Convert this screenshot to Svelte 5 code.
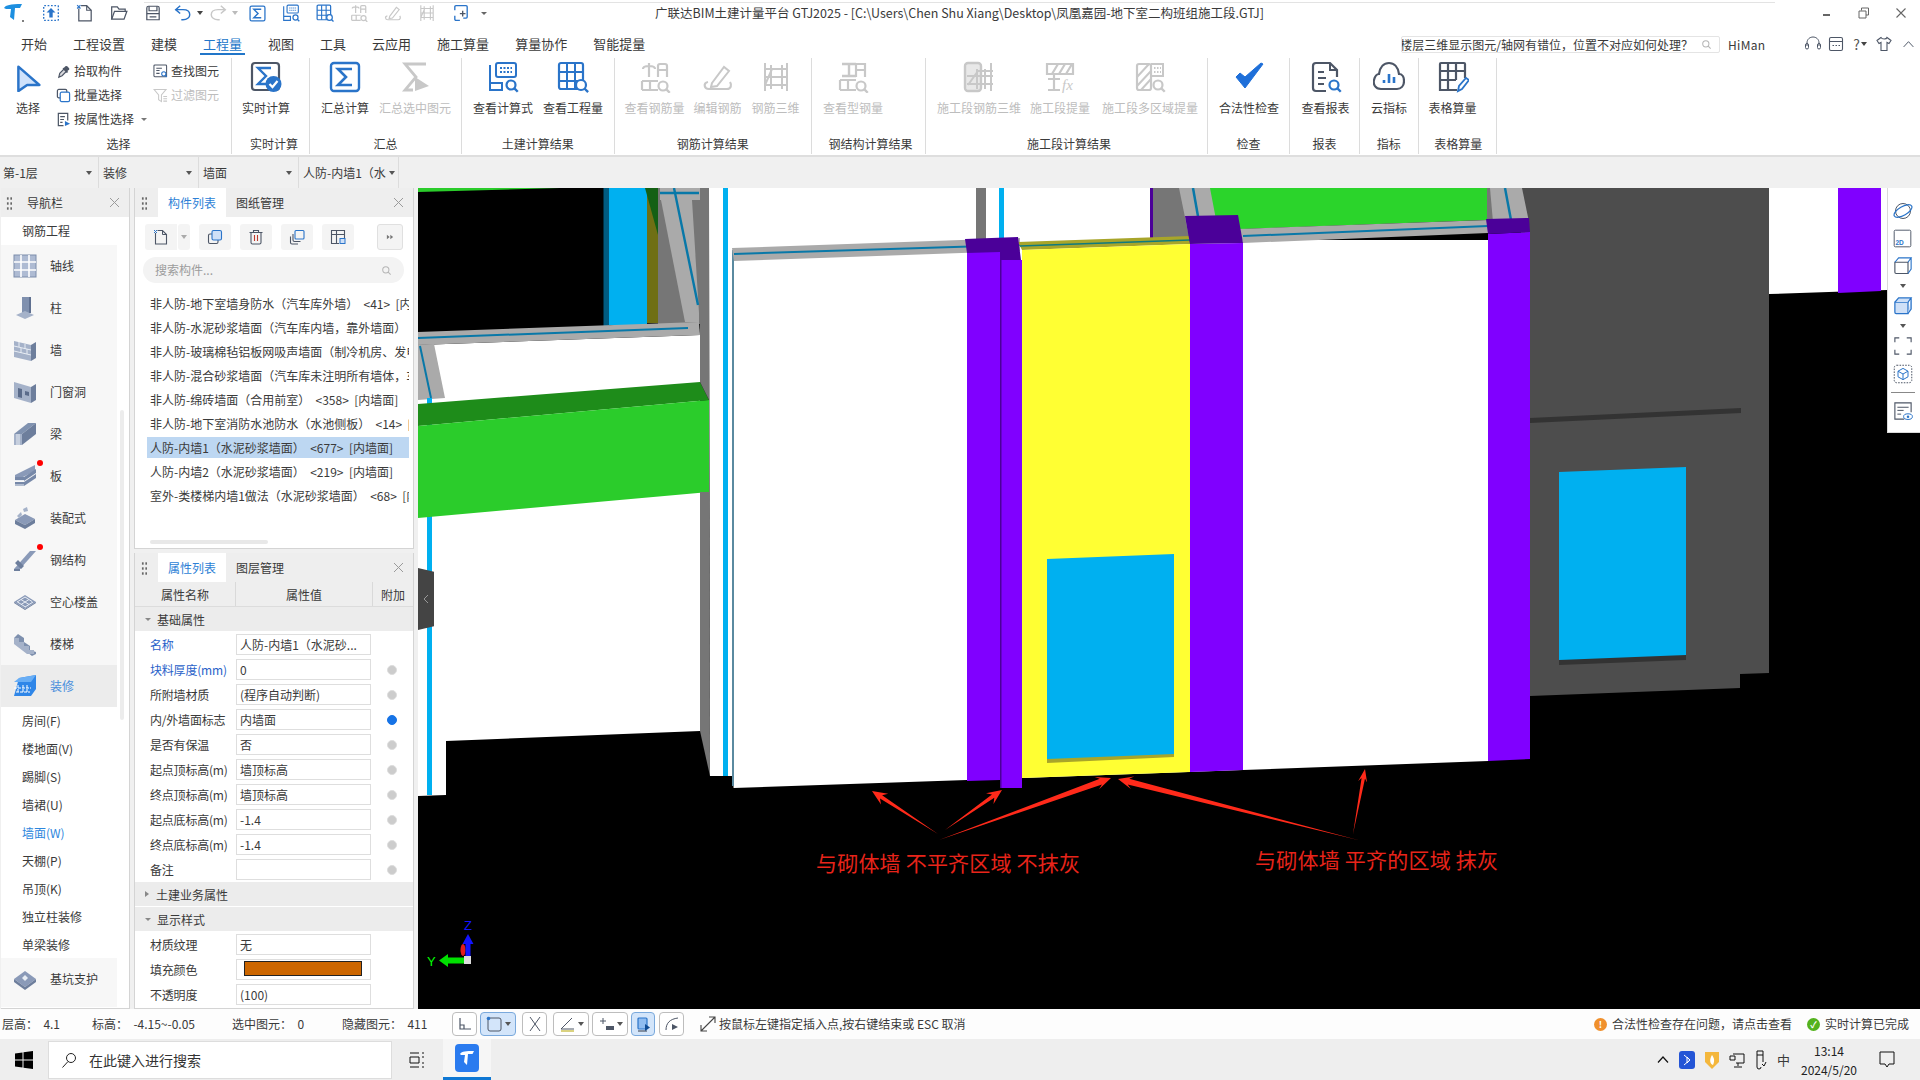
<script>
const B = '#2a74c9', D = '#4d5666', G = '#c8c8c8';
const mag = (c, x = 24, y = 24, r = 4.5) => `<circle cx="${x}" cy="${y}" r="${r}" stroke="${c}" stroke-width="2.2" fill="#fff"/><path d="M${x + r * 0.7} ${y + r * 0.7}l3.6 3.6" stroke="${c}" stroke-width="2.4"/>`;
const s = (c, w = 2) => `stroke="${c}" stroke-width="${w}" fill="none"`;
const icons = {
  select: `<path d="M5 3 29 24H15L5 31Z" fill="#cfe2fb" stroke="${B}" stroke-width="2.8" stroke-linejoin="round"/>`,
  sigmaChk: `<rect x="2" y="2" width="27" height="27" rx="3" ${s(D, 2.2)}/><path d="M21 7H8l8 8-8 8h8" ${s(B, 2.4)}/><circle cx="23.500" cy="23" r="8" fill="${B}"/><path d="M19.500 23l3 3 5-6" ${s('#fff', 2.2)}/>`,
  sigma: `<rect x="2" y="2" width="28" height="28" rx="3" ${s(B, 2.4)}/><path d="M23 8H9l8 8-8 8h14" ${s(B, 2.6)}/>`,
  sigmaG: `<path d="M27 3H6l11 13L6 29h8" ${s(G, 2.8)}/><path d="M16 16l14 9-14 5z" fill="${G}"/>`,
  calc: `<path d="M3 4V29H15V22H3" ${s(B, 2)}/><rect x="9" y="2" width="20" height="14" rx="2" ${s(B, 2)}/><path d="M13 7h12M13 11h12" stroke="${B}" stroke-width="2" stroke-dasharray="2 1.500"/>${mag(B, 24, 24)}`,
  qty: `<rect x="2" y="2" width="24" height="26" rx="2" ${s(B, 2.2)}/><path d="M10 2v26M18 2v26M2 11h24M2 20h24" ${s(B, 2)}/>${mag(B, 24, 24, 5)}`,
  rebarQ: `<path d="M10 2v14M4 8c0-4 12-4 12 0" ${s(G, 2.2)}/><path d="M19 16V5a2 2 0 0 1 2-2h5a2 2 0 0 1 2 2v11M19 9h9" ${s(G, 2.2)}/><path d="M3 20h16M3 29h16M3 20v9M11 20v9" ${s(G, 2.2)}/>${mag(G, 24, 25)}`,
  edit: `<path d="M10 22 22 6l5 4-12 15-6 1z" ${s(G, 2)}/><path d="M28 21c2 3 1 7-3 7H7c-5 0-6-6-1-7" ${s(G, 2.2)}/>`,
  rebar3d: `<path d="M5 2v28M27 2v28M5 8h22M5 16h22M5 24h22M5 24 12 8M22 4v24M11 4v24" ${s(G, 2)}/>`,
  steelQ: `<path d="M5 3h14M12 3v13M5 15h14" ${s(G, 2.4)}/><path d="M19 16V3h9v13M19 9h9" ${s(G, 2.2)}/><path d="M3 19h16M3 29h16M3 19v10M11 19v10" ${s(G, 2.2)}/>${mag(G, 24, 25)}`,
  sec3d: `<rect x="2" y="2" width="16" height="28" rx="3" fill="#e8e8e8" ${`stroke="${G}" stroke-width="2.400"`}/><path d="M5 24 15 10h15M4 15h26M4 23h26M28 2v28M14 8v20M22 8v20" ${s(G, 2)}/>`,
  secFx: `<path d="M3 3h26v10H3zM8 13 14 3M15 13 21 3M22 13 28 3M4 18h12M10 13v16M4 29h12" ${s(G, 2.2)}/><text x="18" y="29" font-family="Liberation Serif,serif" font-style="italic" font-size="15" fill="${G}">fx</text>`,
  secMulti: `<rect x="3" y="3" width="14" height="26" rx="2" ${s(G, 2.2)}/><path d="M3 16 15 3M3 25 17 10M7 29l10-11" ${s(G, 2)}/><path d="M17 3h12v12H17" ${s(G, 2)}/><path d="M20 7h7M20 11h7" stroke="${G}" stroke-width="2" stroke-dasharray="1.500 1.500"/>${mag(G, 24, 24)}`,
  check: `<path d="M3 16l9 11L30 3l-2-1-16 14-5-4z" fill="#1e6fd9" stroke="#1e6fd9" stroke-width="1"/>`,
  report: `<path d="M16 30H6a3 3 0 0 1-3-3V5a3 3 0 0 1 3-3h14l7 7v7" ${s(D, 2.2)}/><path d="M20 2v7h7" ${s(D, 2)}/><path d="M8 11h6M8 17h8M8 23h6" ${s(D, 2.200)}/>${mag(B, 24, 24, 4.5)}`,
  cloud: `<path d="M8 28C2 28 0 23 1 19c1-4 3-6 5-6 1-7 5-11 10-11s9 4 10 11c3 0 5 3 5 7 0 5-3 8-7 8z" ${s(D, 2.2)}/><path d="M11 22v-3M16 22v-9M21 22v-6" ${s(B, 2.6)}/>`,
  tableEdit: `<path d="M20 29H3V3a1 1 0 0 1 1-1h23a1 1 0 0 1 1 1v14M3 10h25M3 19h16M11 2v27M19 2v17" ${s(D, 2.2)}/><path d="M21 30l1-5 7-8 3 2-7 9z" ${s(B, 1.800)}/>`,
  pick: `<path d="M6 28l2-8 10-10 5 5-10 10z" fill="#d8d8dc" stroke="${D}" stroke-width="2.500"/><path d="M17 8l3-3a3 3 0 0 1 4 0l4 4a3 3 0 0 1 0 3l-4 3 2 2-3 2L14 10l2-2z" fill="${D}"/>`,
  batch: `<rect x="3" y="3" width="20" height="18" rx="3" ${s(D, 2.6)}/><rect x="9" y="9" width="20" height="20" rx="3" fill="#fff" stroke="${B}" stroke-width="2.600"/>`,
  prop: `<path d="M16 29H5V3h20v15" ${s(D, 2.6)}/><path d="M9 10h10M9 16h8M9 22h5" ${s(D, 2.6)}/><path d="M19 19l11 6-11 5z" fill="${B}"/>`,
  find: `<rect x="2" y="2" width="27" height="25" rx="2" ${s(D, 2.2)}/><path d="M7 9h12M7 14h7M7 20h7" ${s(D, 2.2)}/>${mag(B, 23, 21, 4.5)}`,
  filter: `<path d="M2 3h26L18 15v14l-6-4V15z" ${s(G, 2.2)}/><path d="M22 18h8M22 23h8M22 28h8" ${s(G, 2.2)}/>`,
  upload: `<rect x="3" y="3" width="26" height="26" rx="1" ${s(B, 2.4)} stroke-dasharray="3 3"/><path d="M16 7l8 8h-5v9h-6v-9H8z" fill="${B}"/>`,
  newdoc: `<path d="M5 8V30h22V11l-8-8H9" ${s(D, 2.2)}/><path d="M19 3v8h8" ${s(D, 2)}/><path d="M2 2l6 6M8 2l-6 6" ${s(B, 2)}/>`,
  open: `<path d="M3 27V5h10l3 4h11v4" ${s(D, 2.2)}/><path d="M3 27l5-14h22l-5 14z" ${s(D, 2.2)}/>`,
  save: `<path d="M5 28V7a3 3 0 0 1 3-3h16a3 3 0 0 1 3 3v21z" ${s(D, 2.2)}/><path d="M5 17h22M9 4v8h14V4M10 23h12" ${s(D, 2.2)}/>`,
  undo: `<path d="M11 3 3 10l8 7" ${s(B, 2.6)}/><path d="M3 10h13c8 0 12 4 12 9s-5 9-12 9h-3" ${s(B, 2.6)}/>`,
  redo: `<path d="M21 3l8 7-8 7" ${s(G, 2.6)}/><path d="M29 10H16C8 10 4 14 4 19s5 9 12 9h3" ${s(G, 2.6)}/>`,
  boxplus: `<path d="M5 11V5a2 2 0 0 1 2-2h18a2 2 0 0 1 2 2v18a2 2 0 0 1-2 2h-5M14 29H7a2 2 0 0 1-2-2v-6" ${s(B, 2.4)}/><path d="M14 17h10M19 12v10" ${s(D, 2.400)}/>`,
  copy: `<rect x="3" y="10" width="19" height="19" rx="3" ${s(D, 2.2)}/><rect x="10" y="3" width="19" height="19" rx="3" fill="#cfe0f7" stroke="${B}" stroke-width="2.200"/>`,
  trash: `<path d="M3 7h26M11 7V3h10v4M6 7v20a3 3 0 0 0 3 3h14a3 3 0 0 0 3-3V7" ${s(D, 2.2)}/><path d="M13 12v12M19 12v12" stroke="#c0392b" stroke-width="2.200"/>`,
  copy2: `<path d="M3 15v12a3 3 0 0 0 3 3h12M8 10v12a3 3 0 0 0 3 3h12" ${s(D, 2.2)}/><rect x="12" y="3" width="18" height="17" rx="2" ${s(B, 2.2)}/>`,
  tbl: `<path d="M18 29H3V3h26v15" ${s(D, 2.2)}/><path d="M3 11h10M13 3v26M13 11h16" ${s(D, 2.2)}/><rect x="20" y="19" width="10" height="10" fill="#cfe0f7" stroke="${B}" stroke-width="2"/>`,
  orbit: `<ellipse cx="16" cy="16" rx="12" ry="12" ${s(D, 1.600)}/><ellipse cx="16" cy="16" rx="16" ry="7" transform="rotate(-30 16 16)" ${s(B, 2)}/>`,
  two: `<rect x="2" y="2" width="28" height="28" rx="2" ${s(D, 1.600)}/><text x="4" y="27" font-family="Liberation Sans,sans-serif" font-weight="700" font-size="11" fill="${B}">2D</text>`,
  cube: `<path d="M3 10v16a2 2 0 0 0 2 2h19V10z" ${s(D, 1.800)}/><path d="M3 10l6-7h20l-5 7M29 3v18l-5 7" ${s(B, 1.800)}/>`,
  cubeB: `<path d="M3 10v16a2 2 0 0 0 2 2h19V10z" fill="#cfe0f7" stroke="${B}" stroke-width="2"/><path d="M3 10l6-7h20l-5 7M29 3v18l-5 7" fill="#cfe0f7" stroke="${B}" stroke-width="2"/>`,
  corners: `<path d="M3 10V3h7M22 3h7v7M29 22v7h-7M10 29H3v-7" ${s(D, 1.800)}/>`,
  hexbox: `<rect x="2" y="2" width="28" height="28" rx="4" ${s(D, 1.600)} stroke-dasharray="2.500 2"/><path d="M16 7l8 4.500v9L16 25l-8-4.500v-9zM8 11.500l8 4.500 8-4.500M16 16v9" ${s(B, 1.600)}/>`,
  listeye: `<path d="M18 29H3V3h26v15" ${s(D, 1.800)}/><path d="M7 10h18M7 15h10M7 21h6" ${s(D, 1.600)}/><ellipse cx="24" cy="25" rx="7" ry="4.500" ${s(B, 1.600)}/><circle cx="24" cy="25" r="2" fill="${B}"/>`,
  glass: `<circle cx="14" cy="14" r="9" ${s('#b5b5b5', 3)}/><path d="M21 21l7 7" ${s('#b5b5b5', 3)}/>`,
  headset: `<path d="M4 20v-6C4 6 10 2 16 2s12 4 12 12v6" ${s(D, 2)}/><rect x="1" y="15" width="6" height="11" rx="3" ${s(D, 2)}/><rect x="25" y="15" width="6" height="11" rx="3" ${s(D, 2)}/>`,
  cal: `<rect x="3" y="3" width="26" height="26" rx="3" ${s(D, 2.2)}/><path d="M3 11h26M9 19h3M15 19h3M21 19h3" ${s(D, 2.2)}/>`,
  shirt: `<path d="M10 3 2 9l4 6 4-2v16h12V13l4 2 4-6-8-6c-1 4-10 4-12 0z" ${s(D, 2.200)}/>`,
  up: `<path d="M4 22 16 9l12 13" ${s(D, 2.400)}/>`,
  ff: `<path d="M6 9l9 7-9 7zM17 9l9 7-9 7z" fill="#777"/>`,
};

const nav = [
  ['轴线', 'grid'], ['柱', 'col'], ['墙', 'wall'], ['门窗洞', 'door'], ['梁', 'beam'], ['板', 'slab', true], ['装配式', 'pre'], ['钢结构', 'steel', true], ['空心楼盖', 'hollow'], ['楼梯', 'stair'], ['装修', 'deco']
];
const sub = ['房间(F)', '楼地面(V)', '踢脚(S)', '墙裙(U)', '墙面(W)', '天棚(P)', '吊顶(K)', '独立柱装修', '单梁装修'];
const navIcons = {
  grid: `<rect x="1" y="1" width="22" height="22" fill="#aebbd3" stroke="#7d8dab"/><path d="M8 1v22M16 1v22M1 8h22M1 16h22" stroke="#fff" stroke-width="1.600"/>`,
  col: `<path d="M9 1h7v16H9z" fill="#7f90ae"/><path d="M16 1h2v16h-2z" fill="#5f7090"/><path d="M3 19l9-4 9 4-9 4z" fill="#a5b2c9"/>`,
  wall: `<path d="M1 3l17 4v16L1 19z" fill="#a5b2c9"/><path d="M18 7l5-3v16l-5 3z" fill="#6d7e9c"/><path d="M1 8l17 4M1 13l17 4M6 4v5M12 6v5M8 10v5M14 11v5" stroke="#e8edf4"/>`,
  door: `<path d="M1 2l17 5v16L1 18z" fill="#a5b2c9"/><path d="M18 7l5-3v16l-5 3z" fill="#6d7e9c"/><path d="M5 8l4 1v9l-4-1zM12 11l4 1v4l-4-1z" fill="#5a6b8a"/>`,
  beam: `<path d="M1 12 15 1h8L9 12z" fill="#8092b0"/><path d="M1 12h8v11H1z" fill="#a5b2c9"/><path d="M9 12 23 1v11L9 23z" fill="#6d7e9c"/><path d="M4 12v11M6 12v11" stroke="#e8edf4"/>`,
  slab: `<path d="M2 11 22 1v6L8 14 2 13z" fill="#8a9ab8"/><path d="M2 13h9l12-8v4L11 17H2zM2 18h9l12-8v4L11 22H2z" fill="#7688a8"/><path d="M2 16.500h9M2 21h9" stroke="#e8edf4"/>`,
  pre: `<path d="M2 14l10-6 10 5-10 6z" fill="#8a9ab8"/><path d="M2 14v4l10 5 10-6v-4l-10 6z" fill="#6d7e9c"/><path d="M4 10l4-4 1 3-3 3zM10 3l4-2 1 4-4 1z" fill="#a5b2c9"/>`,
  steel: `<path d="M1 21 17 3h6L7 21z" fill="#8a9ab8"/><path d="M1 21h6v2H1zM5 12l6 6-3 3-6-6z" fill="#6d7e9c"/>`,
  hollow: `<path d="M1 12 12 5l11 7-11 7z" fill="#8a9ab8"/><path d="M4 12l8-5M8 14.500l8-5M12 17l8-5M8 9.500l8 5M4.500 12l8 5M12 7l7 4.500" stroke="#e8edf4" stroke-width="1"/><path d="M1 12v1l11 7 11-7v-1l-11 7z" fill="#6d7e9c"/>`,
  stair: `<path d="M1 6l4-4 6 4v4l6 4v4l6 2v2l-4 2L1 10z" fill="#7e90ae"/><path d="M1 6h5v4h5v4h5v4h5v4H14L1 12z" fill="#a5b2c9"/>`,
  deco: `<path d="M6 4 23 1v14L18 22H1z" fill="#2f86e8"/><path d="M6 4 23 1 18 8H1z" fill="#69aef5"/><path d="M1 14h17M3 18h14M5 11v7M10 11v7M14 11v7" stroke="#fff" stroke-dasharray="3 1"/>`,
  pit: `<path d="M1 12 12 4l11 8-11 8z" fill="#8a9ab8"/><path d="M1 12v3l11 8 11-8v-3l-11 8z" fill="#6d7e9c"/><path d="M9 11l3-3 3 3-3 3z" fill="#e8edf4"/>`
};

const listRows = [
  '非人防-地下室墙身防水（汽车库外墙）  <41>  [内墙面]',
  '非人防-水泥砂浆墙面（汽车库内墙，靠外墙面）',
  '非人防-玻璃棉毡铝板网吸声墙面（制冷机房、发电机房）',
  '非人防-混合砂浆墙面（汽车库未注明所有墙体，车库）',
  '非人防-绵砖墙面（合用前室）  <358>  [内墙面]',
  '非人防-地下室消防水池防水（水池侧板）  <14>  [内墙面]',
  '人防-内墙1（水泥砂浆墙面）  <677>  [内墙面]',
  '人防-内墙2（水泥砂浆墙面）  <219>  [内墙面]',
  '室外-类楼梯内墙1做法（水泥砂浆墙面）  <68>  [内墙面]'
];

const groups = [
  { label: '实时计算', w: 78, pad: 5, shift: 7, items: [['实时计算', 58, 'sigmaChk']] },
  { label: '汇总', w: 152, pad: 7, items: [['汇总计算', 56, 'sigma'], ['汇总选中图元', 84, 'sigmaG', 1]] },
  { label: '土建计算结果', w: 152.5, pad: 6, items: [['查看计算式', 70, 'calc'], ['查看工程量', 70, 'qty']] },
  { label: '钢筋计算结果', w: 197.5, pad: 8, items: [['查看钢筋量', 64, 'rebarQ', 1], ['编辑钢筋', 62, 'edit', 1], ['钢筋三维', 54, 'rebar3d', 1]] },
  { label: '钢结构计算结果', w: 114, pad: 6, shift: 4, items: [['查看型钢量', 70, 'steelQ', 1]] },
  { label: '施工段计算结果', w: 282, pad: 5, shift: 5, items: [['施工段钢筋三维', 96, 'sec3d', 1], ['施工段提量', 66, 'secFx', 1], ['施工段多区域提量', 114, 'secMulti', 1]] },
  { label: '检查', w: 82, pad: 0, items: [['合法性检查', 82, 'check']] },
  { label: '报表', w: 70, pad: 0, items: [['查看报表', 71, 'report']] },
  { label: '指标', w: 58.500, pad: 0, items: [['云指标', 58, 'cloud']] },
  { label: '表格算量', w: 78.500, pad: 0, shift: 2, items: [['表格算量', 68, 'tableEdit']] }
];

const quick = [['upload', 34], ['newdoc', 34], ['open', 34], ['save', 34]];

const props = [
  ['g', '基础属性', true],
  ['名称', '人防-内墙1（水泥砂...', 'b', false],
  ['块料厚度(mm)', '0', 'b', true],
  ['所附墙材质', '(程序自动判断)', '', true],
  ['内/外墙面标志', '内墙面', '', 'on'],
  ['是否有保温', '否', '', true],
  ['起点顶标高(m)', '墙顶标高', '', true],
  ['终点顶标高(m)', '墙顶标高', '', true],
  ['起点底标高(m)', '-1.4', '', true],
  ['终点底标高(m)', '-1.4', '', true],
  ['备注', '', '', true],
  ['g', '土建业务属性', false],
  ['g', '显示样式', true],
  ['材质纹理', '无', '', false],
  ['填充颜色', '#swatch', '', false],
  ['不透明度', '(100)', '', false]
];

function arrow(tx, ty, hx, hy, w = 5, hl = 15, hw = 6.500) {
  const L = Math.hypot(hx - tx, hy - ty), dx = (hx - tx) / L, dy = (hy - ty) / L, nx = -dy, ny = dx;
  const bx = hx - dx * hl, by = hy - dy * hl, cx = hx - dx * hl * 0.72, cy = hy - dy * hl * 0.72;
  return [[tx, ty], [cx + nx * w / 2, cy + ny * w / 2], [bx + nx * hw, by + ny * hw], [hx, hy], [bx - nx * hw, by - ny * hw], [cx - nx * w / 2, cy - ny * w / 2]].map((p) => p.map((v) => v.toFixed(1)).join(',')).join(' ');
}
const arrows = [arrow(938, 834, 872, 791, 4), arrow(945, 830, 1002, 790, 4), arrow(939, 840, 1111, 778, 6), arrow(1358, 840, 1118, 779, 6), arrow(1353, 834, 1365, 769, 3.500, 13, 4.500)];

const stBtns = [
  { w: 25, ml: 0, i: `<path d="M3 2v11h11M3 9h4v4" stroke="${D}" stroke-width="1.200" fill="none"/>` },
  { w: 36, ml: 3, on: true, drop: true, i: `<rect x="2" y="2" width="13" height="13" rx="2" stroke="${D}" fill="none"/><circle cx="2.500" cy="2.500" r="1.800" fill="${B}"/>` },
  { w: 25, ml: 6, i: `<path d="M3 1l10 14M13 1 3 15" stroke="${D}" fill="none"/>` },
  { w: 36, ml: 6, drop: true, i: `<path d="M2 13 13 2M2 13h13" stroke="${D}" fill="none"/><path d="M2 15h13" stroke="#b5a500"/>` },
  { w: 36, ml: 3, drop: true, i: `<path d="M2 5h6M5 2v6" stroke="${D}" fill="none"/><rect x="8" y="10" width="8" height="4" fill="${D}"/>` },
  { w: 24, ml: 3, on: true, i: `<rect x="3" y="2" width="9" height="11" rx="1" fill="#8fbcf0" stroke="#2a74c9" stroke-width="1.200"/><path d="M3 15h9" stroke="${D}" stroke-width="1.200"/><path d="M10 8l5 3.500-5 3.500z" fill="#0f4b94"/>` },
  { w: 25, ml: 4, i: `<path d="M2 14C2 7 6 3 14 2" stroke="${D}" fill="none"/><path d="M8 8l6 3-6 3z" fill="${D}"/>` }
];
</script>

{#snippet ic(name, size)}
  <svg class="ico" width={size} height={size} viewBox="0 0 32 32" fill="none">{@html icons[name]}</svg>
{/snippet}

<div class="app">
  <header class="titlebar">
    <div class="logo">
      <svg width="22" height="22" viewBox="0 0 22 22"><path d="M1 6C3 3 7 2 19 2l-2 4h-5l-1 12-4-3 1-8H3z" fill="#1d8fe0"/><circle cx="20" cy="19" r="1" fill="#555"/></svg>
    </div>
    {#each quick as q}
      <div class="qa">{@render ic(q[0], 18)}</div>
    {/each}
    <div class="qa wide">{@render ic('undo', 18)}<i class="car"></i></div>
    <div class="qa wide">{@render ic('redo', 18)}<i class="car lt"></i></div>
    <div class="qa">{@render ic('sigma', 17)}</div>
    <div class="qa">{@render ic('calc', 18)}</div>
    <div class="qa">{@render ic('qty', 18)}</div>
    <div class="qa">{@render ic('rebarQ', 18)}</div>
    <div class="qa">{@render ic('edit', 18)}</div>
    <div class="qa">{@render ic('rebar3d', 18)}</div>
    <div class="qa">{@render ic('boxplus', 18)}</div>
    <i class="car small"></i>
    <div class="title">广联达BIM土建计量平台 GTJ2025 - [C:\Users\Chen Shu Xiang\Desktop\凤凰嘉园-地下室二构班组施工段.GTJ]</div>
    <div class="winbtns">
      <svg width="12" height="12" viewBox="0 0 12 12"><rect x="2" y="7" width="7" height="2" fill="#666"/></svg>
      <svg width="12" height="12" viewBox="0 0 12 12"><path d="M3.500 3.500V1h7v7H8M1 4h7v7H1z" stroke="#666" fill="none"/></svg>
      <svg width="12" height="12" viewBox="0 0 12 12"><path d="M1.500 1.500l9 9M10.500 1.500l-9 9" stroke="#666" stroke-width="1.100"/></svg>
    </div>
  </header>

  <nav class="tabs">
    {#each ['开始', '工程设置', '建模', '工程量', '视图', '工具', '云应用', '施工算量', '算量协作', '智能提量'] as t}
      <span class="tab" class:active={t === '工程量'}>{t}</span>
    {/each}
    <div class="tabs-right">
      <div class="help">
        <span class="help-text">楼层三维显示图元/轴网有错位，位置不对应如何处理？</span>
        {@render ic('glass', 11)}
      </div>
      <span class="user">HiMan</span>
      <span class="hi first">{@render ic('headset', 16)}</span>
      <span class="hi">{@render ic('cal', 16)}</span>
      <span class="hi q">?<i class="car tiny"></i></span>
      <span class="hi">{@render ic('shirt', 16)}</span>
      <span class="hi">{@render ic('up', 13)}</span>
    </div>
  </nav>

  <section class="ribbon">
    <div class="group sel-group">
      <div class="gbody selbody">
        <div class="big selbig">{@render ic('select', 28)}<span>选择</span></div>
        <div class="tools col1">
          <div class="tool">{@render ic('pick', 15)}<span>拾取构件</span></div>
          <div class="tool">{@render ic('batch', 15)}<span>批量选择</span></div>
          <div class="tool">{@render ic('prop', 15)}<span>按属性选择</span><i class="car small2"></i></div>
        </div>
        <div class="tools col2">
          <div class="tool">{@render ic('find', 15)}<span>查找图元</span></div>
          <div class="tool off">{@render ic('filter', 15)}<span>过滤图元</span></div>
        </div>
      </div>
      <div class="glabel g-sel">选择</div>
    </div>
    {#each groups as g}
      <div class="group" style="width:{g.w}px">
        <div class="gbody" style="padding-left:{g.pad}px">
          {#each g.items as it}
            <div class="big" class:off={it[3]} style="width:{it[1]}px">
              {@render ic(it[2], 32)}
              <span>{it[0]}</span>
            </div>
          {/each}
        </div>
        <div class="glabel" style="padding-left:{g.shift || 0}px">{g.label}</div>
      </div>
    {/each}
    <div class="group last"></div>
  </section>

  <section class="combos">
    <div class="combo">第-1层<i class="car dk"></i></div>
    <div class="combo">装修<i class="car dk"></i></div>
    <div class="combo">墙面<i class="car dk"></i></div>
    <div class="combo clip"><span>人防-内墙1（水</span><i class="car dk"></i></div>
  </section>

  <main class="main">
    <aside class="navpanel">
      <div class="phead">
        <span class="dots"></span>
        <span class="phtitle">导航栏</span>
        <span class="x"></span>
      </div>
      <div class="navcat">钢筋工程</div>
      {#each nav as n}
        <div class="navitem" class:sel={n[0] === '装修'}>
          <svg class="nico" width="24" height="24" viewBox="0 0 24 24">{@html navIcons[n[1]]}</svg>
          <span>{n[0]}</span>
          {#if n[2]}<b class="reddot"></b>{/if}
        </div>
      {/each}
      {#each sub as x}
        <div class="subitem" class:cur={x === '墙面(W)'}>{x}</div>
      {/each}
      <div class="navitem pit">
        <svg class="nico" width="24" height="24" viewBox="0 0 24 24">{@html navIcons.pit}</svg>
        <span>基坑支护</span>
      </div>
      <div class="vthumb"></div>
    </aside>

    <div class="midcol">
      <section class="panel listpanel">
        <div class="phead">
          <span class="dots"></span>
          <span class="ptab act">构件列表</span>
          <span class="ptab">图纸管理</span>
          <span class="x"></span>
        </div>
        <div class="toolbar">
          <span class="tbtn first">{@render ic('newdoc', 16)}</span>
          <span class="tbtn drop"><i class="car"></i></span>
          <span class="tbtn">{@render ic('copy', 16)}</span>
          <span class="tbtn">{@render ic('trash', 16)}</span>
          <span class="tbtn">{@render ic('copy2', 16)}</span>
          <span class="tbtn">{@render ic('tbl', 16)}</span>
          <span class="tbtn more">{@render ic('ff', 10)}</span>
        </div>
        <div class="searchbox"><span>搜索构件...</span>{@render ic('glass', 11)}</div>
        <div class="rows">
          {#each listRows as r, i}
            <div class="lrow" class:sel={i === 6}>{r}</div>
          {/each}
        </div>
        <div class="hthumb"></div>
      </section>
      <section class="panel proppanel">
        <div class="phead">
          <span class="dots"></span>
          <span class="ptab act">属性列表</span>
          <span class="ptab">图层管理</span>
          <span class="x"></span>
        </div>
        <div class="thead"><span>属性名称</span><span>属性值</span><span>附加</span></div>
        {#each props as p}
          {#if p[0] === 'g'}
            <div class="pgroup"><i class={p[2] ? 'tri open' : 'tri'}></i>{p[1]}</div>
          {:else}
            <div class="prow">
              <span class="pname" class:blue={p[2] === 'b'}>{p[0]}</span>
              <span class="pval">
                {#if p[1] === '#swatch'}<b class="swatch"></b>{:else}{p[1]}{/if}
              </span>
              <span class="padd">{#if p[3]}<b class="dot" class:on={p[3] === 'on'}></b>{/if}</span>
            </div>
          {/if}
        {/each}
      </section>
    </div>

    <section class="viewport">
      <svg class="scene" width="1502" height="821" viewBox="418 188 1502 821">
        <rect x="418" y="188" width="1502" height="821" fill="#000"/>
        <polygon points="418,188 560,188 418,192" fill="#2bcc2b"/>
        <rect x="603.500" y="188" width="6" height="138" fill="#005b80"/>
        <rect x="609" y="188" width="38" height="137" fill="#00b0f0"/>
        <rect x="647" y="188" width="12" height="135" fill="#6f6f14"/>
        <polygon points="645,188 658,188 658,235" fill="#146014"/>
        <rect x="658" y="188" width="42" height="136" fill="#767676"/>
        <rect x="660" y="188" width="40" height="12" fill="#aaa"/>
        <polygon points="661,200 692,200 699,313 699,322 685,322" fill="#aaa"/>
        <path d="M660 193H699M674 188 698 305" stroke="#0878a8" stroke-width="2.400" fill="none"/>
        <polygon points="418,345 700,335 700,731 446,741 446,795 418,796" fill="#fff"/>
        <polygon points="418,332 699,322 700,335 418,345" fill="#aaa"/>
        <path d="M418 338 688 328" stroke="#0878a8" stroke-width="2" fill="none"/>
        <polygon points="418,345 434,344 445,398 418,400" fill="#aaa"/>
        <path d="M420 346 431 398" stroke="#0878a8" stroke-width="2" fill="none"/>
        <rect x="427" y="398" width="5" height="397" fill="#00b0f0"/>
        <polygon points="418,404 700,382 709,400 418,426" fill="#1e8c1a"/>
        <polygon points="418,426 709,400 709,492 418,518" fill="#2bcc2b"/>
        <polygon points="700,188 709,188 709,400 700,382" fill="#767676"/>
        <polygon points="700,492 709,492 710,776 700,731" fill="#767676"/>

        <polygon points="1521,188 1769,188 1769,673 1740,674 1740,688 1530,696 1530,234 1521,234" fill="#4d4d4d"/>
        <polygon points="1530,418 1741,408 1741,413 1530,423" fill="#333"/>
        <polygon points="1559,477 1686,472 1686,660 1559,665" fill="#333"/>
        <polygon points="1559,472 1686,467 1686,655 1559,660" fill="#00b0f0"/>
        <polygon points="1769,188 1887,188 1887,290 1769,294" fill="#fff"/>
        <polygon points="1838,188 1881,188 1881,291 1838,293" fill="#8000ff"/>

        <polygon points="709,188 1153,188 1153,240 1488,240 1488,761 1243,770 967,780 733.600,788 733,776 710,776" fill="#fff"/>
        <rect x="723" y="188" width="5" height="588" fill="#00b0f0"/>
        <rect x="732" y="250" width="2" height="536" fill="#5a8aa0"/>
        <rect x="976" y="188" width="10" height="54" fill="#767676"/>
        <rect x="999" y="188" width="5" height="54" fill="#00b0f0"/>
        <polygon points="732,248 1020,238 1020,251 734,261" fill="#aaa"/>
        <path d="M734 254 1020 245" stroke="#0878a8" stroke-width="2" fill="none"/>
        <rect x="1150" y="188" width="3" height="50" fill="#4b0099"/>
        <polygon points="1153,188 1186,188 1190,240 1153,240" fill="#767676"/>
        <polygon points="1179,188 1215,188 1222,232 1188,232" fill="#aaa"/>
        <path d="M1193 188 1199 222" stroke="#0878a8" stroke-width="2.500" fill="none"/>
        <polygon points="1210,188 1487,188 1487,220 1243,229 1218,230" fill="#2bd42b"/>
        <polygon points="1238,229 1488,220 1488,233 1243,243" fill="#aaa"/>
        <path d="M1243 236 1488 226" stroke="#0878a8" stroke-width="2" fill="none"/>
        <polygon points="1487,188 1493,188 1493,222 1487,222" fill="#767676"/>
        <polygon points="1490,188 1522,188 1529,222 1493,222" fill="#aaa"/>
        <path d="M1505 188 1511 220" stroke="#0878a8" stroke-width="2.500" fill="none"/>
        <polygon points="1018,242 1190,236 1190,244 1022,250" fill="#a8a52a"/>
        <path d="M1020 246 1190 240" stroke="#0d7a80" stroke-width="1.500" fill="none"/>
        <polygon points="1022,250 1190,244 1190,772 1022,778" fill="#ffff33"/>
        <polygon points="1047,564 1174,559 1174,757 1047,763" fill="#a8a52a"/>
        <polygon points="1047,559 1174,554 1174,754 1047,759" fill="#00b0f0"/>
        <polygon points="967,252 1000,252 1000,780 967,781" fill="#8000ff"/>
        <polygon points="965,239 1018,237 1021,260 1000,260 1000,252 967,253" fill="#4b0099"/>
        <polygon points="1000,260 1022,260 1022,788 1000,788" fill="#8000ff"/>
        <rect x="1000" y="252" width="1.500" height="536" fill="#4b0099"/>
        <polygon points="1190,244 1243,243 1243,770 1190,772" fill="#8000ff"/>
        <polygon points="1185,216 1238,215 1243,243 1190,244" fill="#4b0099"/>
        <polygon points="1488,234 1530,232 1530,759 1488,761" fill="#8000ff"/>
        <polygon points="1486,219 1529,218 1530,232 1488,234" fill="#4b0099"/>

        {#each arrows as a}
          <polygon points={a} fill="#ff2a1a"/>
        {/each}
        <text x="816" y="871" class="note" textLength="264">与砌体墙 不平齐区域 不抹灰</text>
        <text x="1255" y="868" class="note" textLength="243">与砌体墙 平齐的区域 抹灰</text>

        <text x="464" y="930" class="axis" fill="#1313ff">Z</text>
        <text x="427" y="966" class="axis" fill="#00ff00">Y</text>
        <ellipse cx="463" cy="950" rx="2.500" ry="6" fill="#e21b1b"/>
        <path d="M465.500 958V944h-3l5.500-10 5.500 10h-3v14z" fill="#1313ff"/>
        <path d="M464 957.500h-16v-3.500l-9 6.500 9 6.500v-3.500h16z" fill="#00e000"/>
        <rect x="464" y="956" width="7" height="8" fill="#ddd"/>
      </svg>

      <div class="collapse"><svg width="6" height="10" viewBox="0 0 6 10"><path d="M5 1 1 5l4 4" stroke="#999" fill="none"/></svg></div>

      <div class="sidetools">
        {@render ic('orbit', 20)}
        {@render ic('two', 19)}
        {@render ic('cube', 20)}
        <i class="car dk"></i>
        {@render ic('cubeB', 20)}
        <i class="car dk"></i>
        {@render ic('corners', 20)}
        {@render ic('hexbox', 20)}
        <hr />
        {@render ic('listeye', 20)}
      </div>
    </section>
  </main>

  <footer class="status">
    <span class="st w1">层高：  4.1</span>
    <span class="st w2">标高：  -4.15~-0.05</span>
    <span class="st w3">选中图元：  0</span>
    <span class="st w3">隐藏图元：  411</span>
    {#each stBtns as b}
      <span class="stbtn" class:on={b.on} style="width:{b.w}px;margin-left:{b.ml}px">
        <svg width="16" height="16" viewBox="0 0 16 16">{@html b.i}</svg>
        {#if b.drop}<i class="car dk"></i>{/if}
      </span>
    {/each}
    <svg class="hint-ico" width="16" height="16" viewBox="0 0 16 16"><path d="M1 15 15 1M9 1h6v6M1 9v6h6" stroke="#444" stroke-width="1.100" fill="none"/></svg>
    <span class="hint">按鼠标左键指定插入点,按右键结束或 ESC 取消</span>
    <div class="st-right">
      <b class="badge warn">!</b><span>合法性检查存在问题，请点击查看</span>
      <b class="badge okb">✓</b><span>实时计算已完成</span>
    </div>
  </footer>

  <footer class="taskbar">
    <svg class="win" width="18" height="18" viewBox="0 0 18 18"><path d="M0 2.500 7.500 1.400V8.500H0zM8.500 1.300 18 0V8.500H8.500zM0 9.500H7.500v7.100L0 15.500zM8.500 9.500H18V18L8.500 16.700z" fill="#000"/></svg>
    <div class="tsearch">
      <svg width="16" height="16" viewBox="0 0 16 16"><circle cx="10" cy="6" r="4.500" stroke="#222" fill="none"/><path d="M7 9.500 1.500 15.500" stroke="#222"/></svg>
      <span>在此键入进行搜索</span>
    </div>
    <svg class="tview" width="16" height="16" viewBox="0 0 16 16"><path d="M1 1h9M1 15h9M1 5h9v6H1zM13 1h2M13 5h2M13 11h2M13 15h2" stroke="#111" fill="none"/></svg>
    <div class="tapp">
      <svg width="24" height="28" viewBox="0 0 24 28"><rect width="24" height="28" rx="4" fill="#2a7bef"/><path d="M5 10c2-3 6-3 14-3l-1.500 3H13l-1 11-3-3 1-7H6z" fill="#fff"/></svg>
    </div>
    <div class="tray">
      <svg width="12" height="12" viewBox="0 0 12 12"><path d="M1 8.500 6 3l5 5.500" stroke="#111" stroke-width="1.200" fill="none"/></svg>
      <svg width="16" height="18" viewBox="0 0 16 18"><rect width="16" height="18" rx="3" fill="#2455d6"/><path d="M5 4l6 5-3 3V6l3 3-6 5" stroke="#fff" fill="none"/></svg>
      <svg width="14" height="18" viewBox="0 0 14 18"><path d="M0 1h14v10l-7 7-7-7z" fill="#f4b73c"/><path d="M7 4c2 3 3 5 1 10C5 13 4 9 7 4z" fill="#fff"/></svg>
      <svg width="16" height="18" viewBox="0 0 16 18"><path d="M4 3h11v9H7M9 12v3M5 16h8M1 5h5v4H1z" stroke="#111" fill="none"/></svg>
      <svg width="12" height="20" viewBox="0 0 12 20"><path d="M2 1h6v4H2zM2 5v12a2 2 0 0 0 4 0M8 5v7M7 14l2 2 2-4" stroke="#111" fill="none"/></svg>
      <span class="ime">中</span>
      <div class="clock"><span>13:14</span><span>2024/5/20</span></div>
      <svg width="16" height="18" viewBox="0 0 16 18"><path d="M1 1h14v12h-5l-2 3-2-3H1z" stroke="#111" fill="none"/></svg>
    </div>
  </footer>
</div>

<style>
:global(body) { margin: 0; background: #f0f0f0; }
.app { width: 1920px; height: 1080px; display: flex; flex-direction: column; overflow: hidden; font: 12px/16px "Noto Sans CJK SC", "Noto Sans", sans-serif; color: #3a3a3a; background: #f0f0f0; }
.ico { display: block; flex: none; }
i { font-style: normal; }
.car { display: inline-block; width: 0; height: 0; border: 3.500px solid transparent; border-top: 4px solid #444; border-bottom: 0; flex: none; }
.car.lt { border-top-color: #bbb; }
.car.dk { border-top-color: #555; }

.titlebar { height: 34px; flex: none; background: #fff; display: flex; align-items: center; position: relative; box-sizing: border-box; padding-bottom: 8px; }
.titlebar::before { content: ""; position: absolute; left: 144px; right: 145px; top: 2px; height: 1px; background: #e3e3e3; }
.logo { width: 34px; display: flex; padding-left: 3px; box-sizing: border-box; }
.qa { width: 34px; display: flex; justify-content: center; align-items: center; gap: 5px; }
.qa.wide { width: 35px; justify-content: flex-start; padding-left: 4px; box-sizing: border-box; }
.car.small { margin-left: 3px; border-width: 3px; border-top: 3px solid #666; border-bottom: 0; }
.title { margin-left: 168px; white-space: nowrap; font-size: 12.5px; }
.winbtns { margin-left: auto; display: flex; gap: 25px; padding-right: 13px; }

.tabs { height: 21px; flex: none; background: #fff; display: flex; align-items: center; padding-left: 21px; gap: 26px; position: relative; font-size: 13px; }
.tab { position: relative; line-height: 19px; padding-bottom: 2px; }
.tab.active { color: #2176c9; }
.tab.active::after { content: ""; position: absolute; left: -3px; right: -3px; bottom: 0; height: 2px; background: #2176c9; }
.tabs-right { margin-left: auto; display: flex; align-items: center; font-size: 12px; }
.help { width: 319px; height: 17px; box-sizing: border-box; border: 1px solid #e4e4e4; border-radius: 2px; display: flex; align-items: center; justify-content: flex-end; padding-right: 7px; gap: 8px; overflow: hidden; }
.help-text { white-space: nowrap; flex: none; line-height: 15px; }
.user { margin: 0 0 0 8px; width: 74px; letter-spacing: 0.3px; }
.hi { width: 24px; display: flex; justify-content: center; margin-top: -1px; align-items: center; color: #555; }
.hi.first { width: 22px; }
.hi.q { gap: 1px; font-size: 14px; }

.ribbon { height: 102px; flex: none; background: #fff; display: flex; border-bottom: 2px solid #dedede; box-sizing: border-box; }
.group { height: 96px; margin-top: 3px; flex: none; box-sizing: border-box; border-right: 1px solid #dcdcdc; display: flex; flex-direction: column; }
.group.last { border: 0; flex: 1; }
.sel-group { width: 232px; }
.gbody { height: 78px; display: flex; box-sizing: border-box; padding-top: 3px; }
.glabel { text-align: center; line-height: 16px; margin-top: 0; }
.g-sel { padding-left: 6px; }
.big { display: flex; flex-direction: column; align-items: center; flex: none; white-space: nowrap; }
.big span { margin-top: 7px; }
.big.off { color: #bdbdbd; }
.selbig { width: 56px; padding-top: 3px; }
.selbig span { margin-top: 8px; }
.selbody { padding-top: 3px; }
.tools { display: flex; flex-direction: column; gap: 8px; padding-top: 2px; }
.col1 { width: 97px; }
.tool { display: flex; align-items: center; gap: 3px; height: 16px; white-space: nowrap; }
.tool.off { color: #bdbdbd; }
.car.small2 { margin-left: 4px; border-width: 3px; border-top: 3px solid #777; border-bottom: 0; }

.combos { height: 31px; flex: none; display: flex; background: #f0f0f0; box-sizing: border-box; font-size: 12px; }
.combo { width: 99px; margin-right: 1px; display: flex; align-items: center; justify-content: space-between; box-sizing: border-box; padding: 0 6px 0 3px; background: #f0f0f0; border-right: 1px solid #dcdcdc; white-space: nowrap; }
.combo.clip { padding-right: 3px; }
.combo.clip span { overflow: hidden; width: 84px; }

.main { height: 821px; flex: none; display: flex; background: #f0f0f0; }
.navpanel { width: 128px; margin-left: 1px; background: #fff; border-right: 1px solid #d4d4d4; border-bottom: 1px solid #d4d4d4; position: relative; flex: none; display: flex; flex-direction: column; box-sizing: content-box; }
.phead { height: 29px; flex: none; background: #eeeeee; display: flex; align-items: center; position: relative; }
.dots { width: 6px; height: 14px; margin-left: 5px; background-image: radial-gradient(circle, #666 1px, transparent 1.300px); background-size: 3.500px 5px; flex: none; }
.phtitle { margin-left: 15px; }
.x { position: absolute; right: 10px; top: 10px; width: 9px; height: 9px; background: linear-gradient(45deg, transparent 46%, #9a9a9a 46%, #9a9a9a 54%, transparent 54%), linear-gradient(-45deg, transparent 46%, #9a9a9a 46%, #9a9a9a 54%, transparent 54%); }
.navcat { height: 28px; flex: none; line-height: 28px; padding-left: 21px; }
.navitem { height: 42px; flex: none; width: 116px; background: #f7f7f7; display: flex; align-items: center; position: relative; }
.navitem.sel { background: #ececec; color: #4a8fdc; }
.nico { margin-left: 12px; margin-right: 13px; }
.reddot { position: absolute; left: 36px; top: 5px; width: 6px; height: 6px; background: #f00; border-radius: 50%; }
.subitem { height: 28px; flex: none; line-height: 28px; padding-left: 21px; }
.subitem.cur { color: #2d86dd; }
.navitem.pit { height: 49px; padding-bottom: 7px; box-sizing: border-box; margin-top: -1px; }
.vthumb { position: absolute; right: 5px; top: 222px; width: 4px; height: 310px; background: #ececec; border-radius: 2px; }

.midcol { width: 280px; margin-left: 4px; flex: none; display: flex; flex-direction: column; gap: 4px; }
.panel { background: #fff; border: 1px solid #d4d4d4; border-top: 0; box-sizing: border-box; }
.listpanel { height: 361px; position: relative; }
.proppanel { height: 456px; }
.panel .dots { margin-left: 6px; }
.ptab { height: 29px; line-height: 29px; padding: 0 10px; width: 68px; box-sizing: border-box; text-align: center; margin-left: 0; }
.ptab.act { background: #fff; color: #2d7fd6; margin-left: 11px; }
.toolbar { height: 26px; margin-top: 7px; display: flex; padding-left: 10px; }
.tbtn { width: 32px; height: 26px; border-radius: 3px; background: #f4f4f4; display: flex; align-items: center; justify-content: center; margin-right: 9px; }
.tbtn.first { border-radius: 3px 0 0 3px; margin-right: 1px; }
.tbtn.drop { width: 12px; }
.tbtn.drop .car { border-top-color: #aaa; }
.tbtn.more { width: 26px; margin-left: 14px; margin-right: 0; box-sizing: border-box; border: 1px solid #e0e0e0; }
.searchbox { margin: 7px 9px 0 8px; height: 26px; border-radius: 13px; background: #f3f3f3; display: flex; align-items: center; justify-content: space-between; padding: 0 12px; color: #9c9c9c; }
.rows { margin: 10px 4px 0 12px; overflow: hidden; }
.lrow { height: 24px; line-height: 21px; white-space: pre; padding-left: 3px; overflow: hidden; box-sizing: border-box; padding-top: 0; }
.lrow.sel { background: #bdd7f2; height: 21px; margin-bottom: 3px; }
.hthumb { position: absolute; left: 15px; bottom: 4px; width: 118px; height: 4px; border-radius: 2px; background: #e8e8e8; }

.thead { height: 25px; display: flex; background: #eeeeee; text-align: center; line-height: 26px; box-sizing: border-box; border-bottom: 1px solid #dcdcdc; }
.thead span:nth-child(1) { width: 100px; border-right: 1px solid #d9d9d9; }
.thead span:nth-child(2) { width: 136px; border-right: 1px solid #d9d9d9; }
.thead span:nth-child(3) { width: 40px; }
.pgroup { height: 25px; background: #ececec; line-height: 25px; padding-left: 10px; display: flex; align-items: center; box-sizing: border-box; border-bottom: 1px solid #fff; }
.tri { width: 0; height: 0; margin-right: 7px; border: 3px solid transparent; border-left: 4px solid #888; border-right: 0; }
.tri.open { border: 3px solid transparent; border-top: 3px solid #888; border-bottom: 0; margin-right: 6px; }
.prow { height: 25px; display: flex; align-items: center; }
.pname { width: 100px; padding-left: 15px; box-sizing: border-box; white-space: nowrap; flex: none; letter-spacing: -0.2px; }
.pname.blue { color: #2a62c9; }
.pval { width: 135px; height: 21px; line-height: 19px; box-sizing: border-box; border: 1px solid #dedede; padding-left: 3px; flex: none; margin-left: 1px; white-space: nowrap; overflow: hidden; display: block; }
.swatch { display: block; width: 118px; height: 15px; margin: 1px 0 0 4px; background: #cc6600; border: 1px solid #222; box-sizing: border-box; }
.padd { flex: 1; display: flex; justify-content: center; }
.dot { width: 8px; height: 8px; border-radius: 50%; background: #ccc; border: 1px solid #ddd; }
.dot.on { background: #1673e6; border-color: #1673e6; }

.viewport { flex: none; width: 1502px; margin-left: 4px; position: relative; overflow: hidden; background: #000; }
.scene { display: block; }
.note { font-size: 21px; fill: #e8241a; font-family: "Noto Sans CJK SC", sans-serif; }
.axis { font-size: 13px; font-family: "Liberation Sans", sans-serif; }
.collapse { position: absolute; left: 0; top: 380px; width: 16px; height: 62px; background: #444; clip-path: polygon(0 0, 100% 6%, 100% 94%, 0 100%); display: flex; align-items: center; justify-content: center; }
.sidetools { position: absolute; right: 0; top: 0; width: 33px; height: 245px; box-sizing: border-box; background: #fff; border: 1px solid #d9d9d9; border-top: 0; border-right: 0; display: flex; flex-direction: column; align-items: center; padding: 13px 3px 0 0; gap: 8px; }
.sidetools hr { width: 24px; border: 0; border-top: 1px solid #888; margin: 0; flex: none; }

.status { height: 30px; flex: none; background: #fdfdfd; display: flex; align-items: center; padding-left: 2px; }
.st { white-space: pre; flex: none; }
.w1 { width: 90px; }
.w2 { width: 140px; }
.w3 { width: 110px; }
.stbtn { height: 24px; box-sizing: border-box; border: 1px solid #bdbdbd; border-radius: 4px; background: #fff; display: flex; align-items: center; justify-content: center; gap: 3px; flex: none; }
.stbtn.on { background: #d3e5fa; border-color: #7aa9dc; }
.hint-ico { margin-left: 16px; margin-right: 3px; }
.hint { white-space: nowrap; }
.st-right { margin-left: auto; display: flex; align-items: center; padding-right: 11px; white-space: nowrap; gap: 5px; }
.badge { width: 13px; height: 13px; border-radius: 50%; display: flex; align-items: center; justify-content: center; color: #fff; font-size: 9px; line-height: 13px; }
.warn { background: #f0902c; }
.okb { background: #54b21e; margin-left: 10px; }

.taskbar { height: 41px; flex: none; background: #eeeeee; display: flex; align-items: center; position: relative; }
.win { margin-left: 15px; }
.tsearch { margin-left: 15px; width: 344px; height: 38px; box-sizing: border-box; background: #fff; border: 1px solid #ddd; display: flex; align-items: center; gap: 12px; padding-left: 12px; font-size: 14px; color: #333; }
.tview { margin-left: 17px; }
.tapp { margin-left: 18px; width: 48px; height: 41px; box-sizing: border-box; background: #f6f6f6; border-bottom: 3px solid #0f78d4; display: flex; align-items: center; justify-content: center; }
.tray { margin-left: auto; display: flex; align-items: center; gap: 10px; padding-right: 25px; }
.ime { font-size: 13px; margin-left: 0; }
.clock { display: flex; flex-direction: column; align-items: center; font-size: 12px; line-height: 19px; width: 72px; margin: 0 4px 0 -7px; color: #222; }
</style>
